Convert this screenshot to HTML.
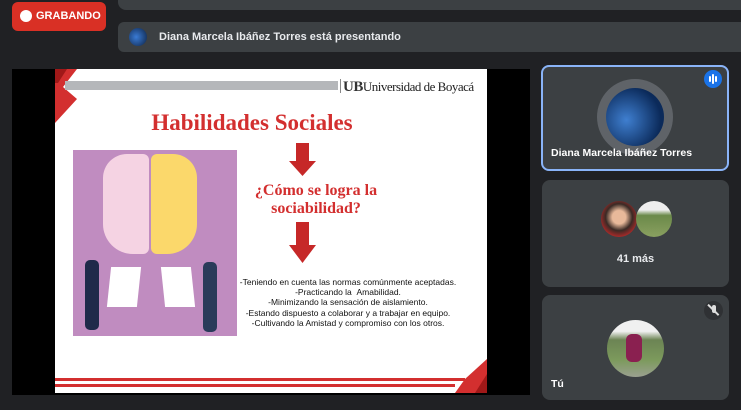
<!DOCTYPE html>
<html><head><meta charset="utf-8"><style>
*{margin:0;padding:0;box-sizing:border-box}
body{width:741px;height:410px;background:#202124;position:relative;overflow:hidden;font-family:"Liberation Sans",sans-serif}
.a{position:absolute}
.tile{position:absolute;background:#3c4043;border-radius:8px}
.av{position:absolute;border-radius:50%;overflow:hidden}
</style></head><body>
<div class="a" style="left:118px;top:-8px;width:640px;height:18px;background:#3c4043;border-radius:8px"></div>
<div class="a" style="left:12px;top:2px;width:94px;height:29px;background:#d93025;border-radius:6px"></div>
<div class="a" style="left:20px;top:10px;width:12px;height:12px;border-radius:50%;background:#fff"></div>
<div class="a" style="left:36px;top:10px;color:#fff;font-size:11px;font-weight:bold">GRABANDO</div>
<div class="a" style="left:118px;top:22px;width:640px;height:30px;background:#3c4043;border-radius:6px"></div>
<div class="av" style="left:129px;top:28px;width:18px;height:18px;background:radial-gradient(circle at 40% 50%,#3a7bd5,#0d2244)"></div>
<div class="a" style="left:159px;top:31px;color:#e8eaed;font-size:11px;font-weight:bold">Diana Marcela Ibáñez Torres está presentando</div>

<div class="a" style="left:12px;top:69px;width:518px;height:326px;background:#000"></div>
<div class="a" style="left:55px;top:69px;width:432px;height:324px;background:#fff;overflow:hidden">
 <svg class="a" style="left:0;top:0" width="432" height="324">
  <polygon points="0,0 22,0 8,18 22,30 0,54" fill="#d32f2f"/>
  <polygon points="0,0 12,0 3,14 0,14" fill="#a01818"/>
  <rect x="10" y="12" width="273" height="9" fill="#b5b7ba"/>
  <rect x="285" y="10" width="1" height="14" fill="#888"/>
  <rect x="0" y="309" width="410" height="3" fill="#d32f2f"/>
  <rect x="0" y="315" width="400" height="3" fill="#d32f2f"/>
  <polygon points="432,290 432,324 400,324 410,310" fill="#d32f2f"/>
  <polygon points="432,305 432,324 420,324" fill="#a01818"/>
  <rect x="241" y="74" width="13" height="19" fill="#c62828"/>
  <polygon points="234,92 261,92 247.5,107" fill="#c62828"/>
  <rect x="241" y="153" width="13" height="24" fill="#c62828"/>
  <polygon points="234,176 261,176 247.5,194" fill="#c62828"/>
 </svg>
 <div class="a" style="left:288px;top:10px;font-family:'Liberation Serif',serif;font-size:13px;color:#222;letter-spacing:-0.5px"><b style="color:#333;font-size:15px">UB</b>Universidad de Boyacá</div>
 <div class="a" style="left:0;width:394px;top:41px;text-align:center;font-family:'Liberation Serif',serif;font-weight:bold;font-size:23px;color:#d32f2f">Habilidades Sociales</div>
 <div class="a" style="left:18px;top:81px;width:164px;height:186px;background:#c08cc0">
  <div class="a" style="left:30px;top:4px;width:46px;height:100px;background:#f5d3e3;border-radius:24px 6px 6px 30px"></div>
  <div class="a" style="left:78px;top:4px;width:46px;height:100px;background:#fbd86b;border-radius:6px 24px 30px 6px"></div>
  <div class="a" style="left:36px;top:117px;width:30px;height:40px;background:#fff;transform:skew(-6deg)"></div>
  <div class="a" style="left:90px;top:117px;width:30px;height:40px;background:#fff;transform:skew(6deg)"></div>
  <div class="a" style="left:12px;top:110px;width:14px;height:70px;background:#1f2a4a;border-radius:5px"></div>
  <div class="a" style="left:130px;top:112px;width:14px;height:70px;background:#2a3b5a;border-radius:5px"></div>
 </div>
 <div class="a" style="left:160px;width:202px;top:113px;text-align:center;font-family:'Liberation Serif',serif;font-weight:bold;font-size:16px;line-height:18px;color:#d32f2f">¿Cómo se logra la<br>sociabilidad?</div>
 <div class="a" style="left:180px;width:226px;top:208px;text-align:center;font-size:8.5px;line-height:10.2px;color:#111">-Teniendo en cuenta las normas comúnmente aceptadas.<br>-Practicando la &nbsp;Amabilidad.<br>-Minimizando la sensación de aislamiento.<br>-Estando dispuesto a colaborar y a trabajar en equipo.<br>-Cultivando la Amistad y compromiso con los otros.</div>
</div>

<div class="tile" style="left:541px;top:65px;width:188px;height:106px;border:2px solid #8ab4f8"></div>
<div class="av" style="left:597px;top:79px;width:76px;height:76px;background:#5f6368"></div>
<div class="av" style="left:606px;top:88px;width:58px;height:58px;background:radial-gradient(circle at 35% 55%,#3f7fd0,#0b2a5a 70%)"></div>
<div class="a" style="left:704px;top:70px;width:18px;height:18px;border-radius:50%;background:#1a73e8"></div>
<div class="a" style="left:709px;top:76px;width:2px;height:6px;background:#fff;border-radius:1px"></div>
<div class="a" style="left:712px;top:74px;width:2px;height:10px;background:#fff;border-radius:1px"></div>
<div class="a" style="left:715px;top:76px;width:2px;height:6px;background:#fff;border-radius:1px"></div>
<div class="a" style="left:551px;top:147px;color:#fff;font-size:10.5px;font-weight:bold">Diana Marcela Ibáñez Torres</div>

<div class="tile" style="left:542px;top:180px;width:187px;height:107px"></div>
<div class="av" style="left:601px;top:201px;width:36px;height:36px;background:radial-gradient(circle at 50% 45%,#e8b99a 25%,#3a2a25 50%,#c72a2a 80%)"></div>
<div class="av" style="left:636px;top:201px;width:36px;height:36px;background:linear-gradient(#eee 25%,#6b8a4a 40%,#8aa060 100%)"></div>
<div class="a" style="left:542px;width:187px;top:253px;text-align:center;color:#e8eaed;font-size:11px;font-weight:bold">41 más</div>

<div class="tile" style="left:542px;top:295px;width:187px;height:105px"></div>
<div class="av" style="left:704px;top:301px;width:19px;height:19px;background:#2f3134"></div>
<div class="a" style="left:712px;top:305px;width:4px;height:8px;border-radius:2px;background:#ddd"></div>
<div class="a" style="left:706px;top:309px;width:15px;height:1.5px;background:#ddd;transform:rotate(45deg)"></div>
<div class="av" style="left:607px;top:320px;width:57px;height:57px;background:linear-gradient(#f0f0f0 20%,#6c8454 35%,#7c9a5c 70%,#9aa090 100%)"></div>
<div class="a" style="left:626px;top:334px;width:16px;height:28px;background:#8a2050;border-radius:6px"></div>
<div class="a" style="left:551px;top:378px;color:#fff;font-size:10.5px;font-weight:bold">Tú</div>
</body></html>
